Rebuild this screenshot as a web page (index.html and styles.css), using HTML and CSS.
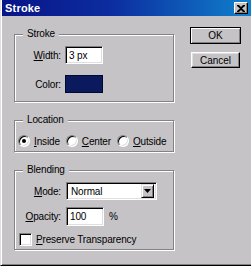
FILE: index.html
```html
<!DOCTYPE html>
<html lang="en">
<head>
    <meta charset="UTF-8">
    <meta name="viewport" content="width=device-width, initial-scale=1.0">
    <title>Stroke</title>
    <link rel="stylesheet" href="styles.css">
</head>
<body>
    <div class="window">
        <div class="titlebar">
            <span class="title">Stroke</span>
            <span class="close">
                <svg width="8" height="7" viewBox="0 0 8 7"><path d="M0 0h2l2 2 2-2h2v1L5 3.5 8 6v1H6L4 5 2 7H0V6l3-2.5L0 1z" fill="#000"/></svg>
            </span>
        </div>
        <div class="content">
            <div class="groups">
                <fieldset class="group">
                    <legend>Stroke</legend>
                    <div class="rows stroke-rows">
                        <div class="row">
                            <span class="label"><u>W</u>idth:</span>
                            <span class="field input">3 px</span>
                        </div>
                        <div class="row">
                            <span class="label">Color:</span>
                            <span class="swatch"></span>
                        </div>
                    </div>
                </fieldset>

                <fieldset class="group">
                    <legend>Location</legend>
                    <div class="radios">
                        <span class="option"><span class="radio checked"></span><span><u>I</u>nside</span></span>
                        <span class="option"><span class="radio"></span><span><u>C</u>enter</span></span>
                        <span class="option"><span class="radio"></span><span><u>O</u>utside</span></span>
                    </div>
                </fieldset>

                <fieldset class="group">
                    <legend>Blending</legend>
                    <div class="rows blend-rows">
                        <div class="row">
                            <span class="label"><u>M</u>ode:</span>
                            <span class="select">
                                <span class="select-text">Normal</span>
                                <span class="arrow">
                                    <svg width="7" height="4" viewBox="0 0 7 4"><path d="M0 0h7L3.5 4z" fill="#000"/></svg>
                                </span>
                            </span>
                        </div>
                        <div class="row">
                            <span class="label"><u>O</u>pacity:</span>
                            <span class="field input opacity">100</span>
                            <span class="unit">%</span>
                        </div>
                        <div class="check-row">
                            <span class="checkbox"></span>
                            <span><u>P</u>reserve Transparency</span>
                        </div>
                    </div>
                </fieldset>
            </div>

            <div class="buttons">
                <button class="btn default">OK</button>
                <button class="btn">Cancel</button>
            </div>
        </div>
    </div>
</body>
</html>
```

FILE: styles.css
```css
body {
    margin: 0;
    background: #c5c3c6;
    font-family: "Liberation Sans", Arial, sans-serif;
    font-size: 10px;
    letter-spacing: -0.15px;
    color: #000;
}
.window {
    width: 251px;
    height: 266px;
    box-sizing: border-box;
    border-left: 1px solid #dfdfdf;
    border-bottom: 1px solid #000;
    padding-left: 1px;
    box-shadow: inset 1px 0 0 #fff, inset 0 -1px 0 #808080;
    display: flex;
    flex-direction: column;
}
.titlebar {
    height: 16px;
    padding: 0 3px 0 3px;
    display: flex;
    align-items: center;
    justify-content: space-between;
    background: linear-gradient(to right, #081488, #0c2ea0 45%, #1080cc);
}
.title {
    color: #fff;
    font-weight: bold;
    font-size: 11px;
    letter-spacing: 0.2px;
}
.close {
    width: 14px;
    height: 12px;
    box-sizing: border-box;
    background: #c5c3c6;
    border: 1px solid;
    border-color: #fff #000 #000 #fff;
    box-shadow: inset -1px -1px 0 #808080;
    display: flex;
    align-items: center;
    justify-content: center;
}
.close svg {
    display: block;
}
.content {
    display: flex;
    padding: 11px 0 0 12px;
}
.groups {
    display: flex;
    flex-direction: column;
    gap: 12px;
    margin-top: 1px;
}
.group {
    margin: 0;
    padding: 0;
    width: 160px;
    box-sizing: border-box;
    min-width: 0;
    border: 1px solid #848284;
    box-shadow: 1px 1px 0 #fff, inset 1px 1px 0 #fff;
}
.group legend {
    margin-left: 8px;
    padding: 0 4px;
    line-height: 12px;
    background: #c5c3c6;
}
.rows {
    display: flex;
    flex-direction: column;
}
.stroke-rows {
    padding: 6px 0 8px 8px;
    gap: 11px;
}
.blend-rows {
    padding: 6px 0 3px 4px;
    gap: 7px;
}
.row {
    display: flex;
    align-items: center;
    gap: 4px;
}
.label {
    width: 38px;
    text-align: right;
}
.blend-rows .label {
    width: 42px;
}
.blend-rows .row {
    gap: 5px;
}
.input {
    width: 38px;
    height: 18px;
    box-sizing: border-box;
    background: #fff;
    border: 1px solid;
    border-color: #808080 #fff #fff #808080;
    box-shadow: inset 1px 1px 0 #000, inset -1px -1px 0 #dfdfdf;
    padding: 3px 0 0 3px;
    line-height: 12px;
}
.opacity {
    height: 19px;
}
.swatch {
    width: 38px;
    height: 18px;
    box-sizing: border-box;
    background: #0a1a5c;
    border: 1px solid #000a30;
}
.select {
    width: 91px;
    height: 18px;
    box-sizing: border-box;
    background: #fff;
    border: 1px solid;
    border-color: #808080 #fff #fff #808080;
    box-shadow: inset 1px 1px 0 #000, inset -1px -1px 0 #dfdfdf;
    display: flex;
    align-items: center;
    justify-content: space-between;
    padding: 0 2px 0 4px;
}
.arrow {
    width: 13px;
    height: 14px;
    box-sizing: border-box;
    background: #c5c3c6;
    border: 1px solid;
    border-color: #dfdfdf #000 #000 #dfdfdf;
    box-shadow: inset 1px 1px 0 #fff, inset -1px -1px 0 #808080;
    display: flex;
    align-items: center;
    justify-content: center;
}
.arrow svg {
    display: block;
}
.radios {
    display: flex;
    align-items: center;
    gap: 6px;
    padding: 9px 0 4px 3px;
}
.option {
    display: flex;
    align-items: center;
    gap: 4px;
    height: 12px;
}
.radio {
    width: 12px;
    height: 12px;
    box-sizing: border-box;
    border-radius: 50%;
    background: #fff;
    border: 1px solid;
    border-color: #808080 #fff #fff #808080;
    box-shadow: inset 1px 1px 0 #000, inset -1px -1px 0 #dfdfdf;
    display: flex;
    align-items: center;
    justify-content: center;
}
.radio.checked::after {
    content: "";
    width: 4px;
    height: 4px;
    border-radius: 50%;
    background: #000;
}
.check-row {
    display: flex;
    align-items: center;
    gap: 4px;
    height: 13px;
}
.checkbox {
    width: 13px;
    height: 13px;
    box-sizing: border-box;
    background: #fff;
    border: 1px solid;
    border-color: #808080 #fff #fff #808080;
    box-shadow: inset 1px 1px 0 #000, inset -1px -1px 0 #dfdfdf;
}
.buttons {
    display: flex;
    flex-direction: column;
    align-items: center;
    gap: 8px;
    margin-left: 16px;
    width: 51px;
}
.btn {
    width: 49px;
    height: 16px;
    margin: 0;
    padding: 0;
    font-family: inherit;
    font-size: 10px;
    color: #000;
    background: #c5c3c6;
    border: 1px solid;
    border-color: #fff #000 #000 #fff;
    box-shadow: inset -1px -1px 0 #808080, inset 1px 1px 0 #dfdfdf;
}
.btn.default {
    width: 51px;
    height: 17px;
    border-color: #000;
    box-shadow: inset 1px 1px 0 #fff, inset -1px -1px 0 #808080;
}
```
